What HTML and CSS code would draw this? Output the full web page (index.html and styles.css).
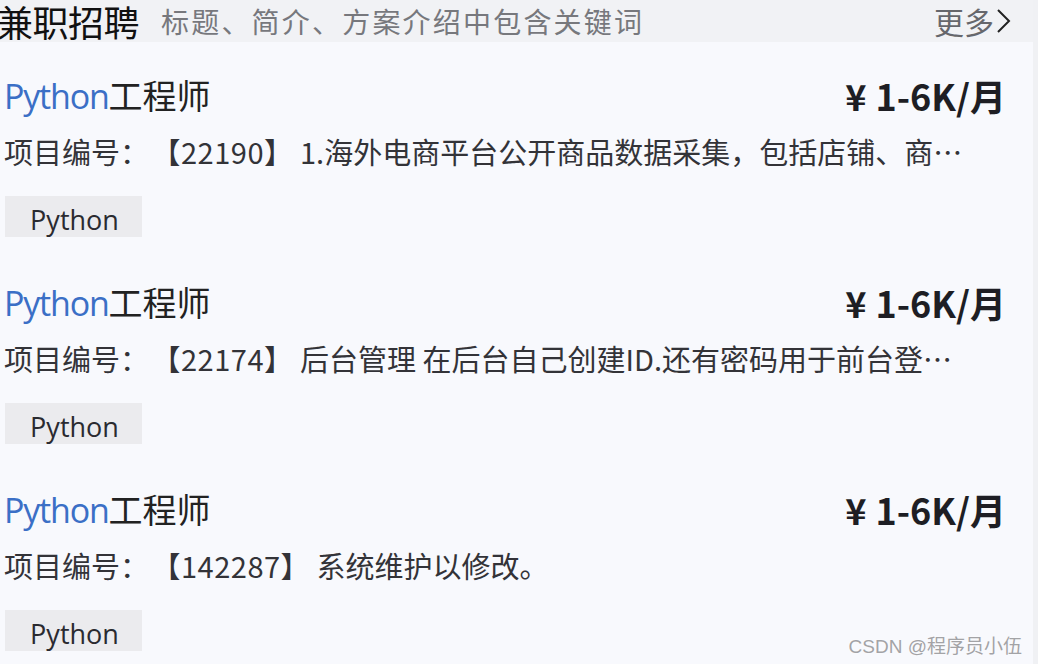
FILE: index.html
```html
<!DOCTYPE html>
<html lang="zh-CN">
<head>
<meta charset="utf-8">
<title>兼职招聘</title>
<link rel="stylesheet" href="styles.css">
</head>
<body>
<div class="page">
  <header class="head">
    <div class="head-left">
      <span class="head-title">兼职招聘</span>
      <span class="head-sub">标题、简介、方案介绍中包含关键词</span>
    </div>
    <a class="more">更多<svg class="chev" width="18" height="28" viewBox="0 0 18 28"><path d="M3 3 L14 14 L3 25" fill="none" stroke="#222" stroke-width="2"/></svg></a>
  </header>
  <main class="list">
    <section class="job">
      <div class="job-top">
        <h2 class="job-title"><span class="lang">Python</span>工程师</h2>
        <div class="price"><span class="yen">¥</span>1-6K/月</div>
      </div>
      <p class="desc">项目编号：<span class="pid">【22190】</span> 1.海外电商平台公开商品数据采集，包括店铺、商品信息、评论等数据</p>
      <span class="tag">Python</span>
    </section>
    <section class="job">
      <div class="job-top">
        <h2 class="job-title"><span class="lang">Python</span>工程师</h2>
        <div class="price"><span class="yen">¥</span>1-6K/月</div>
      </div>
      <p class="desc">项目编号：<span class="pid">【22174】</span> 后台管理 在后台自己创建ID.还有密码用于前台登录使用</p>
      <span class="tag">Python</span>
    </section>
    <section class="job">
      <div class="job-top">
        <h2 class="job-title"><span class="lang">Python</span>工程师</h2>
        <div class="price"><span class="yen">¥</span>1-6K/月</div>
      </div>
      <p class="desc">项目编号：<span class="pid">【142287】</span> 系统维护以修改。</p>
      <span class="tag">Python</span>
    </section>
  </main>
  <div class="watermark">CSDN @程序员小伍</div>
</div>
</body>
</html>
```
FILE: styles.css
```css
html, body {
  margin: 0;
  padding: 0;
}
body {
  background: #f8f9fd;
  font-family: "Noto Sans CJK SC", "Noto Sans", sans-serif;
  color: #2a2a2e;
}
.page {
  position: relative;
  width: 1038px;
  height: 664px;
  overflow: hidden;
  box-sizing: border-box;
  border-right: 5px solid #f0f1f4;
}
.head {
  height: 42px;
  background: #f1f2f5;
  display: flex;
  align-items: center;
  justify-content: space-between;
  padding-right: 20px;
}
.head-left {
  display: flex;
  align-items: center;
  margin-left: -3px;
}
.head-title {
  font-size: 36px;
  line-height: 42px;
  color: #111;
  letter-spacing: -0.5px;
}
.head-sub {
  font-size: 28px;
  line-height: 42px;
  color: #77787d;
  margin-left: 22px;
  letter-spacing: 2.2px;
}
.more {
  display: flex;
  align-items: center;
  font-size: 30px;
  line-height: 42px;
  color: #66676c;
}
.chev {
  margin-left: 1px;
}
.list {
  display: flex;
  flex-direction: column;
  gap: 37px;
  padding: 25px 27px 0 4px;
}
.job {
  display: flex;
  flex-direction: column;
  align-items: flex-start;
}
.job-top {
  align-self: stretch;
  display: flex;
  justify-content: space-between;
  align-items: center;
  height: 56px;
}
.job-title {
  margin: 0;
  font-weight: normal;
  font-size: 34px;
  line-height: 56px;
  color: #222;
}
.lang {
  color: #3b6fc6;
  font-family: "Open Sans", "Noto Sans", sans-serif;
  letter-spacing: -1.2px;
}
.price {
  font-size: 36px;
  font-weight: bold;
  line-height: 56px;
  color: #1e1e24;
}
.yen {
  margin-right: 9px;
}
.desc {
  margin: 0;
  width: 975px;
  font-size: 29px;
  line-height: 56px;
  height: 56px;
  color: #333338;
  white-space: nowrap;
  overflow: hidden;
  text-overflow: ellipsis;
}
.pid {
  margin-left: 17px;
  letter-spacing: 0.5px;
}
.tag {
  margin-top: 17px;
  margin-left: 1px;
  width: 137px;
  height: 41px;
  box-sizing: border-box;
  background: #ebebee;
  font-family: "Open Sans", "Noto Sans", sans-serif;
  font-size: 27px;
  line-height: 48px;
  color: #2a2a30;
  text-align: center;
  padding-left: 2px;
}
.watermark {
  position: absolute;
  right: 11px;
  bottom: 6px;
  font-family: "Liberation Sans", "Noto Sans CJK SC", sans-serif;
  font-size: 19px;
  color: #a3a3a6;
  text-shadow: 0 0 2px #fff;
}
```
